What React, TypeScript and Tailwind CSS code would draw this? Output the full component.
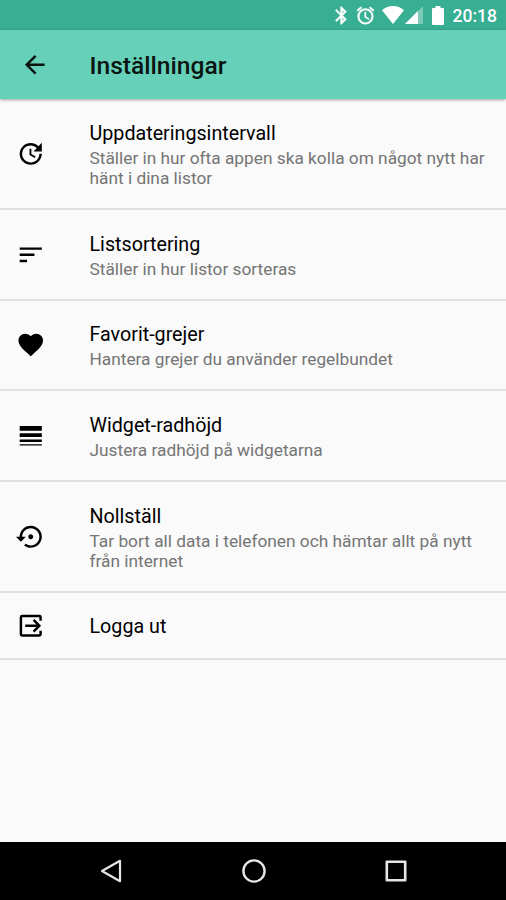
import React from 'react';
import { MdArrowBack, MdFavorite, MdLineWeight, MdSettingsBackupRestore, MdSort } from 'react-icons/md';

interface SettingItem {
  id: string;
  title: string;
  description?: string;
  icon: React.ReactNode;
  rowClass: string;
}

const UpdateIcon = () => (
  <svg viewBox="0 0 24 24" className="w-[29.5px] h-[29.5px]" fill="currentColor">
    <path d="M21 10.12h-6.78l2.74-2.82c-2.73-2.7-7.15-2.8-9.88-.1-2.73 2.71-2.73 7.08 0 9.79s7.15 2.71 9.88 0C18.32 15.65 19 14.08 19 12.1h2c0 1.98-.88 4.55-2.64 6.29-3.51 3.48-9.21 3.48-12.72 0-3.5-3.47-3.53-9.11-.02-12.58s9.14-3.47 12.65 0L21 3v7.12z" />
    <path d="M12.5 8v4.25l3.5 2.08-.72 1.21L11 13V8h1.5z" />
  </svg>
);

const LogoutIcon = () => (
  <svg viewBox="0 0 24 24" className="w-[29.5px] h-[29.5px]" fill="none" stroke="currentColor" strokeWidth="2">
    <path d="M20 8V5a1 1 0 0 0-1-1H5a1 1 0 0 0-1 1v14a1 1 0 0 0 1 1h14a1 1 0 0 0 1-1v-3" />
    <path d="M7.5 12H19M14.3 7.3L19 12l-4.7 4.7" />
  </svg>
);

const iconClass = 'w-[29.5px] h-[29.5px]';

const items: SettingItem[] = [
  {
    id: 'interval',
    title: 'Uppdateringsintervall',
    description: 'Ställer in hur ofta appen ska kolla om något nytt har hänt i dina listor',
    icon: <UpdateIcon />,
    rowClass: 'h-[110px]'
  },
  {
    id: 'sorting',
    title: 'Listsortering',
    description: 'Ställer in hur listor sorteras',
    icon: <MdSort className={iconClass} />,
    rowClass: 'h-[91px]'
  },
  {
    id: 'favorites',
    title: 'Favorit-grejer',
    description: 'Hantera grejer du använder regelbundet',
    icon: <MdFavorite className={iconClass} />,
    rowClass: 'h-[90px]'
  },
  {
    id: 'widget',
    title: 'Widget-radhöjd',
    description: 'Justera radhöjd på widgetarna',
    icon: <MdLineWeight className={iconClass} />,
    rowClass: 'h-[91px]'
  },
  {
    id: 'reset',
    title: 'Nollställ',
    description: 'Tar bort all data i telefonen och hämtar allt på nytt från internet',
    icon: <MdSettingsBackupRestore className={iconClass} />,
    rowClass: 'h-[111px]'
  },
  {
    id: 'logout',
    title: 'Logga ut',
    icon: <LogoutIcon />,
    rowClass: 'h-[67px]'
  }
];

const StatusBar = () => (
  <div className="h-[30px] shrink-0 bg-[#38ae93] text-white flex items-center justify-end pr-[9px]">
    <svg viewBox="0 0 24 24" className="w-[21px] h-[21px]" fill="currentColor" stroke="currentColor" strokeWidth="0.6">
      <path d="M17.71 7.71L12 2h-1v7.59L6.41 5 5 6.41 10.59 12 5 17.59 6.41 19 11 14.41V22h1l5.71-5.71-4.3-4.29 4.3-4.29zM13 5.83l1.88 1.88L13 9.59V5.83zm1.88 10.46L13 18.17v-3.76l1.88 1.88z" />
    </svg>
    <svg viewBox="0 0 24 24" className="w-[21px] h-[21px] ml-[3px] mr-px" fill="currentColor" stroke="currentColor" strokeWidth="0.4">
      <path d="M22 5.72l-4.6-3.86-1.29 1.53 4.6 3.86L22 5.72zM7.88 3.39L6.6 1.86 2 5.71l1.29 1.53 4.59-3.85zM12.5 8H11v6l4.75 2.85.75-1.23-4-2.37V8zM12 4c-4.97 0-9 4.03-9 9s4.02 9 9 9a9 9 0 0 0 0-18zm0 16c-3.87 0-7-3.13-7-7s3.13-7 7-7 7 3.13 7 7-3.13 7-7 7z" />
    </svg>
    <svg viewBox="0 0 22 18" className="w-[22px] h-[18px] ml-[5px]" fill="currentColor">
      <path d="M11 18L0 4.2C3 1.6 6.8 0 11 0s8 1.6 11 4.2z" />
    </svg>
    <svg viewBox="0 0 18 18" className="w-[18px] h-[18px] ml-px" fill="currentColor">
      <path d="M0 18L18 0v18z" opacity="0.35" />
      <path d="M0 18L13 5v13z" />
    </svg>
    <svg viewBox="0 0 12 19" className="w-[12px] h-[19px] ml-[9px] mr-px" fill="currentColor">
      <path d="M3.5 0h5v2H11a1 1 0 0 1 1 1v15a1 1 0 0 1-1 1H1a1 1 0 0 1-1-1V3a1 1 0 0 1 1-1h2.5z" />
    </svg>
    <span className="ml-[8px] pt-[3px] text-[17.5px] leading-none font-medium">20:18</span>
  </div>
);

const NavigationBar = () => (
  <div className="h-[58px] shrink-0 bg-black flex items-center justify-between pl-[99px] pr-[98px]">
    <svg viewBox="0 0 24 24" className="w-6 h-6" fill="none" stroke="#e6e6e6" strokeWidth="2.2" strokeLinejoin="round">
      <path d="M3 12L21 1.8v20.4z" />
    </svg>
    <svg viewBox="0 0 24 24" className="w-6 h-6" fill="none" stroke="#e6e6e6" strokeWidth="2.4">
      <circle cx="12" cy="12" r="10.6" />
    </svg>
    <svg viewBox="0 0 24 24" className="w-6 h-6" fill="none" stroke="#e6e6e6" strokeWidth="2.6" strokeLinejoin="round">
      <rect x="2.8" y="2.8" width="18.4" height="18.4" />
    </svg>
  </div>
);

const App: React.FC = () => {
  return (
    <div className="w-[506px] h-[900px] bg-[#fafafa] flex flex-col overflow-hidden font-[Roboto,sans-serif]">
      <StatusBar />

      {/* Toolbar */}
      <header className="h-[69px] shrink-0 bg-[#67d0b9] shadow-[0_1px_3px_rgba(0,0,0,0.35)] flex items-center pl-5 text-[#0a1512]">
        <MdArrowBack className="w-[29.5px] h-[29.5px]" />
        <h1 className="ml-10 pt-[3px] text-[24.6px] leading-7 font-medium">Inställningar</h1>
      </header>

      {/* Settings list */}
      <main className="flex-1 pt-px">
        {items.map((item) => (
          <div
            key={item.id}
            className={`${item.rowClass} flex items-center border-b-2 border-[#e1e1e1] pl-4 pr-4 text-black`}
          >
            {item.icon}
            <div className={`ml-11 flex-1 ${item.description ? 'pt-px' : 'pt-[3px]'}`}>
              <h2 className="text-[19.7px] leading-[26px]">{item.title}</h2>
              {item.description && (
                <p className="text-[17.3px] leading-5 text-[#757575] mt-px">{item.description}</p>
              )}
            </div>
          </div>
        ))}
      </main>

      <NavigationBar />
    </div>
  );
};

export default App;
